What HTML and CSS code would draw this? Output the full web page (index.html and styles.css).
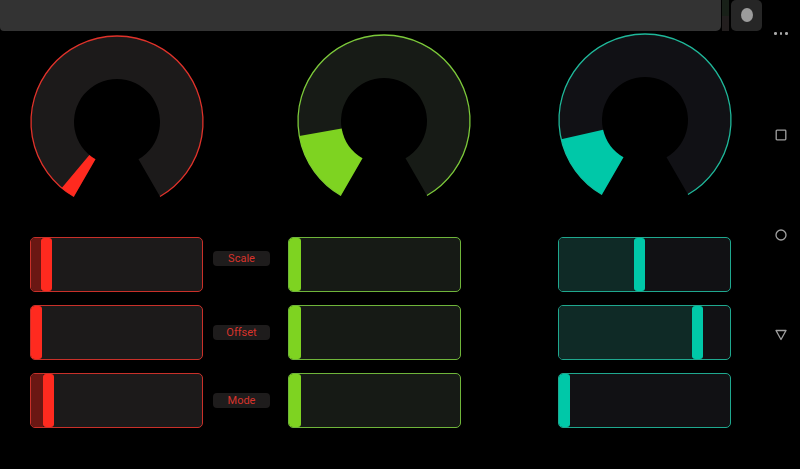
FILE: index.html
```html
<!DOCTYPE html>
<html lang="en">
<head>
<meta charset="utf-8">
<title>Controller</title>
<link rel="stylesheet" href="styles.css">
</head>
<body>
<div class="screen">
  <div class="left">
    <div class="topbar">
      <div class="bar"></div>
      <div class="strip"><span class="strip-top"></span><span class="strip-bottom"></span></div>
      <div class="btn"><span class="btn-dot"></span></div>
    </div>
    <div class="main">
      <div class="knob knob-red">
        <svg width="180" height="180" viewBox="0 0 180 180">
          <path class="track" d="M 47 164.48 A 86 86 0 1 1 133 164.48 L 111.5 127.24 A 43 43 0 1 0 68.5 127.24 Z"/>
          <path class="ring" d="M 47 164.48 A 86 86 0 1 1 133 164.48"/>
          <path class="value" d="M 47 164.48 A 86 86 0 0 1 34.72 155.88 L 62.36 122.94 A 43 43 0 0 0 68.5 127.24 Z"/>
        </svg>
      </div>
      <div class="knob knob-green">
        <svg width="180" height="180" viewBox="0 0 180 180">
          <path class="track" d="M 47 164.48 A 86 86 0 1 1 133 164.48 L 111.5 127.24 A 43 43 0 1 0 68.5 127.24 Z"/>
          <path class="ring" d="M 47 164.48 A 86 86 0 1 1 133 164.48"/>
          <path class="value" d="M 47 164.48 A 86 86 0 0 1 5.31 104.93 L 47.65 97.47 A 43 43 0 0 0 68.5 127.24 Z"/>
        </svg>
      </div>
      <div class="knob knob-teal">
        <svg width="180" height="180" viewBox="0 0 180 180">
          <path class="track" d="M 47 164.48 A 86 86 0 1 1 133 164.48 L 111.5 127.24 A 43 43 0 1 0 68.5 127.24 Z"/>
          <path class="ring" d="M 47 164.48 A 86 86 0 1 1 133 164.48"/>
          <path class="value" d="M 47 164.48 A 86 86 0 0 1 6.2 109.35 L 48.1 99.67 A 43 43 0 0 0 68.5 127.24 Z"/>
        </svg>
      </div>

      <div class="stack stack-red">
        <div class="slider"><div class="fill" style="width:10px"></div><div class="handle"></div></div>
        <div class="slider"><div class="fill" style="width:0px"></div><div class="handle"></div></div>
        <div class="slider"><div class="fill" style="width:12px"></div><div class="handle"></div></div>
      </div>
      <div class="labels">
        <div class="label-row label-row-first"><span class="label">Scale</span></div>
        <div class="label-row"><span class="label">Offset</span></div>
        <div class="label-row"><span class="label">Mode</span></div>
      </div>
      <div class="stack stack-green">
        <div class="slider"><div class="fill" style="width:0px"></div><div class="handle"></div></div>
        <div class="slider"><div class="fill" style="width:0px"></div><div class="handle"></div></div>
        <div class="slider"><div class="fill" style="width:0px"></div><div class="handle"></div></div>
      </div>
      <div class="stack stack-teal">
        <div class="slider"><div class="fill" style="width:75px"></div><div class="handle"></div></div>
        <div class="slider"><div class="fill" style="width:133px"></div><div class="handle"></div></div>
        <div class="slider"><div class="fill" style="width:0px"></div><div class="handle"></div></div>
      </div>
    </div>
  </div>
  <nav class="nav">
    <div class="dots"><span></span><span></span><span></span></div>
    <svg class="nav-icon nav-square" width="12" height="12" viewBox="0 0 12 12"><rect x="1.2" y="1.2" width="9.6" height="9.6" rx="0.8"/></svg>
    <svg class="nav-icon nav-circle" width="12" height="12" viewBox="0 0 12 12"><circle cx="6" cy="6" r="5"/></svg>
    <svg class="nav-icon nav-tri" width="12" height="12" viewBox="0 0 12 12"><path d="M 1 1.5 L 11 1.5 L 6 10.5 Z"/></svg>
  </nav>
</div>
</body>
</html>
```

FILE: styles.css
```css
html, body {
  margin: 0;
  padding: 0;
  background: #000;
}

body {
  width: 800px;
  height: 469px;
  overflow: hidden;
  font-family: Roboto, "Noto Sans", sans-serif;
}

.screen {
  display: flex;
  width: 800px;
  height: 469px;
}

.left {
  width: 762px;
  display: flex;
  flex-direction: column;
}

/* top bar */
.topbar {
  display: flex;
  height: 31px;
}

.bar {
  flex: 1;
  background: #333333;
  border-radius: 0 0 5px 4px;
}

.strip {
  width: 7px;
  margin-left: 1px;
  display: flex;
  flex-direction: column;
}

.strip-top {
  flex: 1;
  background: #182018;
}

.strip-bottom {
  flex: 1;
  background: #221e1e;
}

.btn {
  width: 31px;
  margin-left: 2px;
  background: #262626;
  border-radius: 5px;
  display: flex;
  align-items: center;
  justify-content: center;
}

.btn-dot {
  width: 12px;
  height: 14px;
  border-radius: 50%;
  background: #9c9c9c;
  margin-top: -1px;
}

/* main grid */
.main {
  display: grid;
  grid-template-columns: 173px 10px 57px 18px 173px 97px 173px;
  grid-template-rows: 206px auto;
  padding-left: 30px;
}

.knob {
  display: flex;
  justify-content: center;
  align-items: flex-start;
  grid-row: 1;
}

.knob svg {
  flex: none;
  display: block;
}

.knob-red { grid-column: 1; margin-top: 1px; }
.knob-green { grid-column: 5; margin-left: 18px; margin-top: 0; }
.knob-teal { grid-column: 7; margin-left: 1px; margin-top: -1px; }

.ring {
  fill: none;
  stroke-width: 1.3;
}

.knob-red .track { fill: #1c1a1a; }
.knob-red .ring { stroke: #e0322a; }
.knob-red .value { fill: #ff2a1f; }

.knob-green .track { fill: #171b16; }
.knob-green .ring { stroke: #7cc93a; }
.knob-green .value { fill: #7ed321; }

.knob-teal .track { fill: #111115; }
.knob-teal .ring { stroke: #1fb89a; }
.knob-teal .value { fill: #00c8a8; }

/* sliders */
.stack {
  grid-row: 2;
  display: flex;
  flex-direction: column;
  gap: 13px;
}

.stack-red { grid-column: 1; }
.stack-green { grid-column: 5; }
.stack-teal { grid-column: 7; }

.slider {
  height: 55px;
  box-sizing: border-box;
  border: 1px solid;
  border-radius: 5px;
  display: flex;
  overflow: hidden;
}

.fill {
  height: 100%;
  flex: none;
}

.handle {
  width: 11px;
  height: 100%;
  border-radius: 3px;
  flex: none;
}

.stack-red .slider { border-color: #c93029; background: #1c1a1a; }
.stack-red .fill { background: #6a1713; }
.stack-red .handle { background: #ff2a1f; }

.stack-green .slider { border-color: #6fb53a; background: #161a15; }
.stack-green .fill { background: #2a4a16; }
.stack-green .handle { background: #7ed321; width: 12px; }

.stack-teal .slider { border-color: #1fa88f; background: #111114; }
.stack-teal .fill { background: #0f2a26; }
.stack-teal .handle { background: #00c8a8; }

/* labels */
.labels {
  grid-column: 3;
  grid-row: 2;
  display: flex;
  flex-direction: column;
  gap: 13px;
}

.label-row {
  height: 55px;
  display: flex;
  align-items: center;
}

.label-row-first {
  padding-bottom: 12px;
  box-sizing: border-box;
}

.label {
  width: 57px;
  height: 15px;
  border-radius: 4px;
  background: #1e1c1c;
  color: #d8332b;
  font-size: 11px;
  line-height: 15px;
  text-align: center;
}

/* nav */
.nav {
  width: 38px;
  display: flex;
  flex-direction: column;
  align-items: center;
  padding-top: 32px;
}

.dots {
  display: flex;
  gap: 3px;
  height: 3px;
}

.dots span {
  width: 2.5px;
  height: 2.5px;
  border-radius: 50%;
  background: #a8a8a8;
}

.nav-icon {
  display: block;
  fill: none;
  stroke: #a0a0a0;
  stroke-width: 1.3;
}

.nav-square { margin-top: 94px; }
.nav-circle { margin-top: 88px; }
.nav-tri { margin-top: 88px; stroke-linejoin: round; }
```
